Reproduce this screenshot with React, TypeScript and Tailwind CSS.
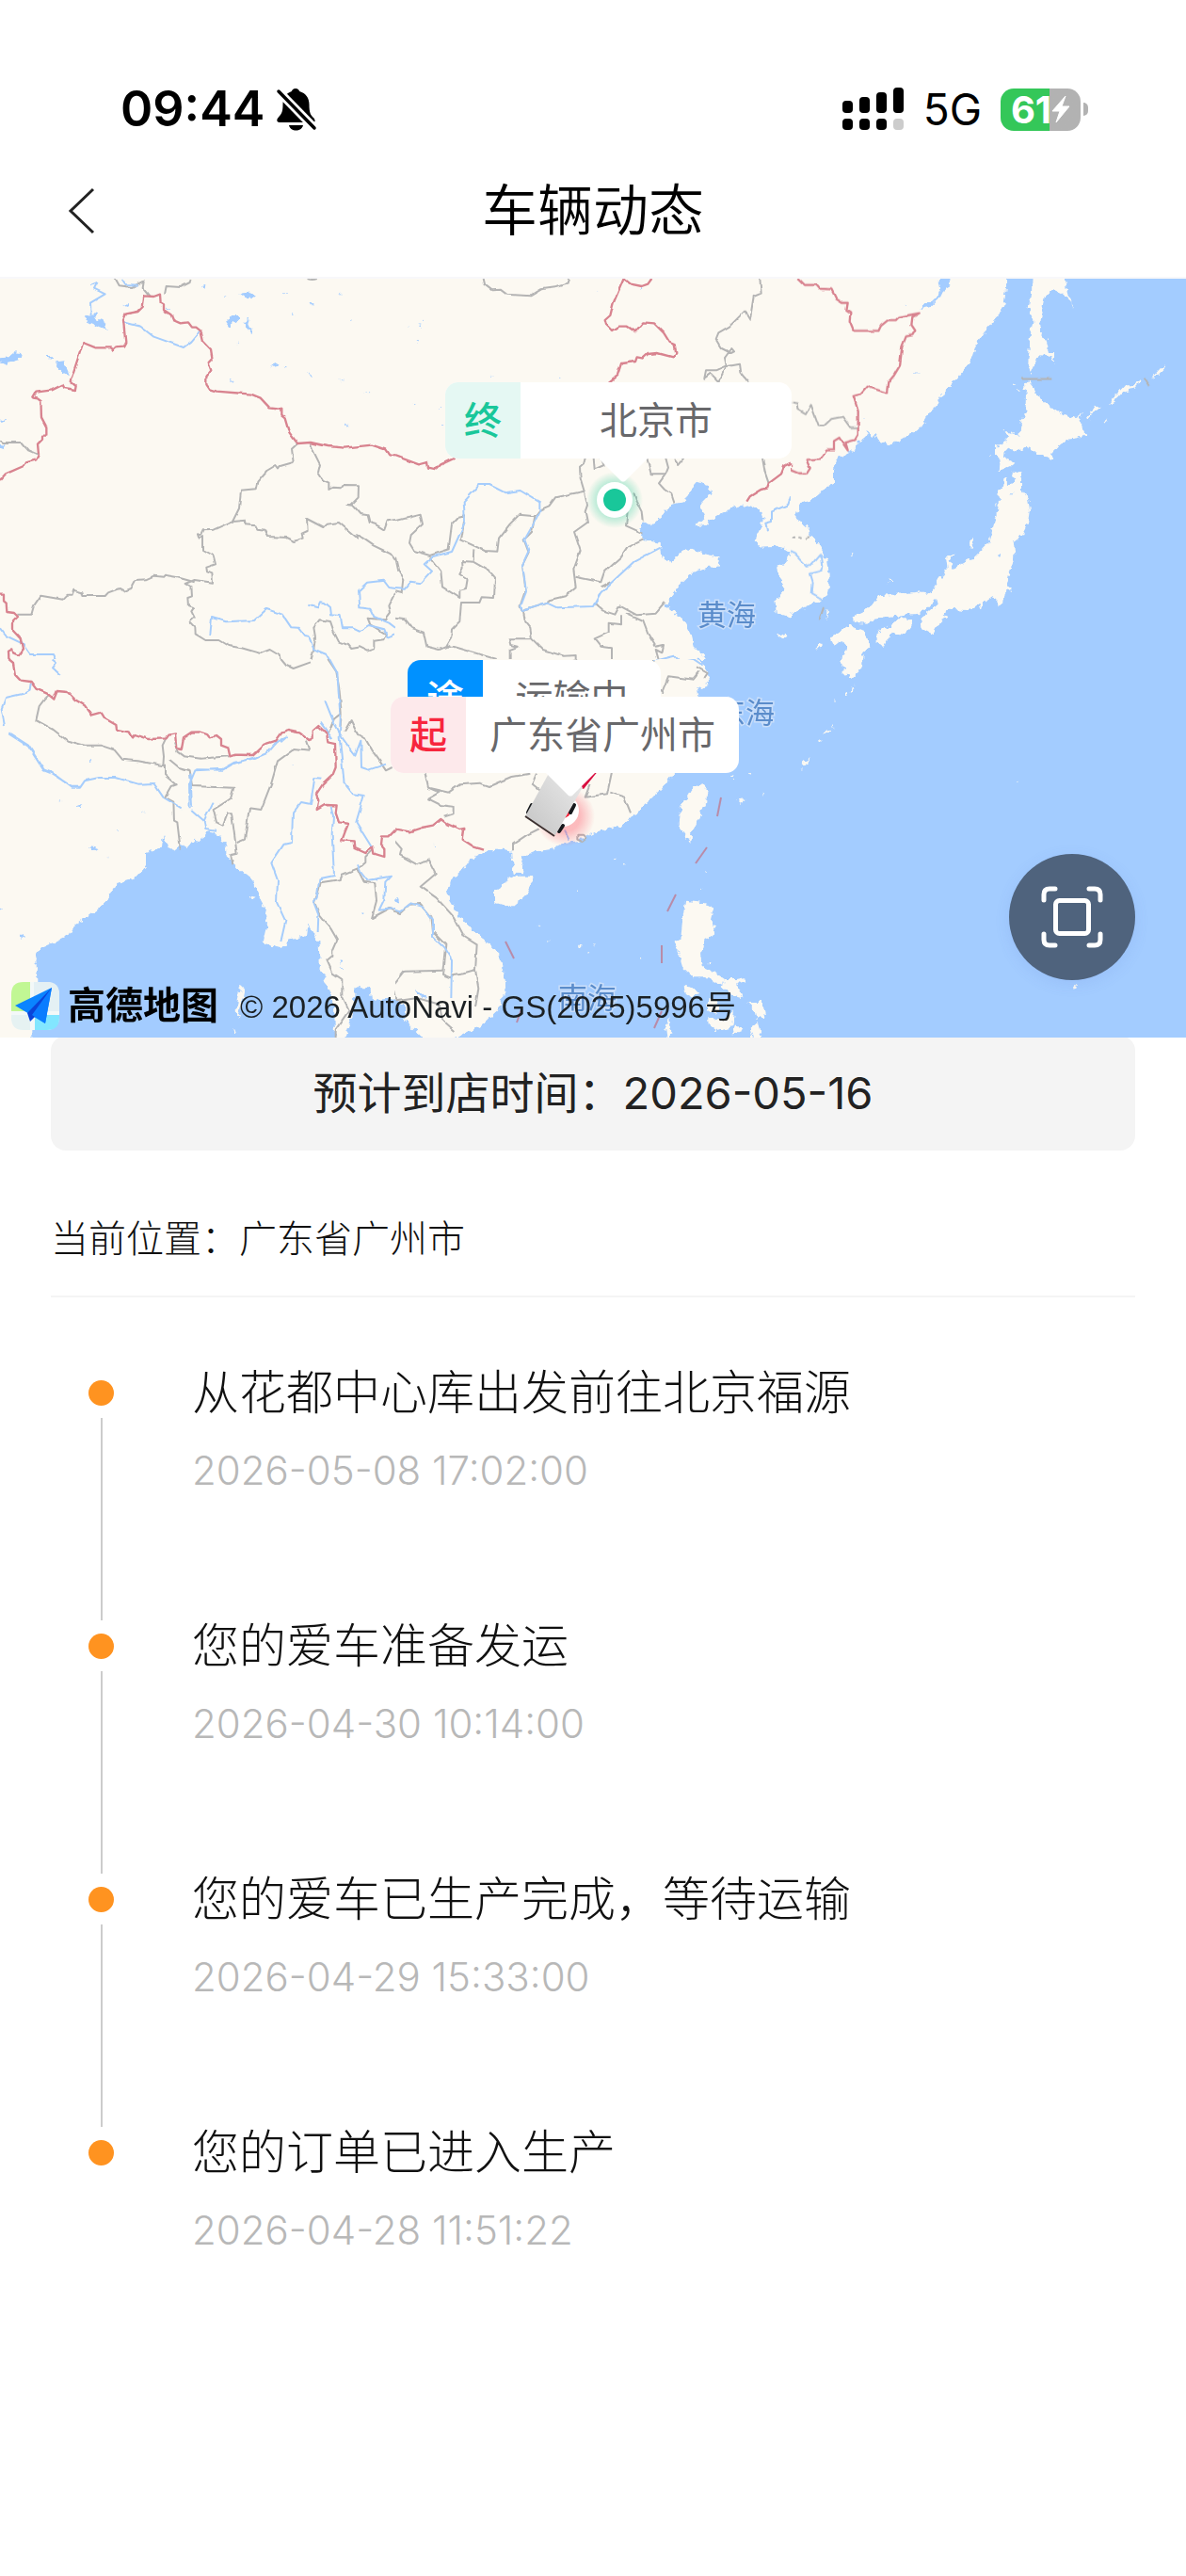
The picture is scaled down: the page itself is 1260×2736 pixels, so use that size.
import React from 'react';

interface TrackEvent {
  title: string;
  time: string;
}

const events: TrackEvent[] = [
  { title: '从花都中心库出发前往北京福源', time: '2026-05-08 17:02:00' },
  { title: '您的爱车准备发运', time: '2026-04-30 10:14:00' },
  { title: '您的爱车已生产完成，等待运输', time: '2026-04-29 15:33:00' },
  { title: '您的订单已进入生产', time: '2026-04-28 11:51:22' }
];

interface TileData {
  x: number;
  y: number;
  width: number;
  height: number;
  viewBox: string;
  sea?: string;
  land?: string;
  lakes?: string;
  rivers?: string;
  provinces?: string;
  border?: string;
}

// Six map tiles, each drawn at three units per pixel.
// The outer ones run a little past the edge of the map.
const tiles: TileData[] = [
  {
    x: 0,
    y: 0,
    width: 420,
    height: 410,
    viewBox: '0 0 1260 1230',
    lakes:
      'M265 143L300 130L312 133L300 143L325 150L345 182L320 175L280 155Z M0 268L30 265L45 253L70 255L65 275L40 282L15 288L0 283Z M140 263L170 265L172 273L150 270Z M182 283L205 280L212 305L222 328L190 312L180 298Z M765 62L785 60L815 70L808 82L785 78Z M735 138L765 138L750 155L738 160L735 178L723 178L725 155Z M775 155L795 145L790 160L803 188L793 187Z M390 102L412 99L405 108Z M643 38L655 36L653 50L645 48Z M975 315L998 332L985 330Z M870 295L885 289L890 295L862 303Z M987 96L1003 97L990 101Z M1160 379L1180 379L1178 382Z M0 545L20 548L10 562L0 558Z M0 467L25 465L5 474Z M1103 484L1112 486L1106 491Z M1083 341L1095 341L1090 346Z M735 340L743 340L738 347Z M925 131L938 132L930 135Z M755 217L765 220L760 225Z M1075 62L1090 70L1080 70Z M905 296L915 297L910 301Z M530 110L540 112L535 120Z M715 77L725 77L720 81Z M905 64L912 64L910 68Z M1112 150L1118 150L1116 153Z',
    rivers:
      'M285 40L310 30L300 50L335 67L288 95L290 135 M388 18L400 36L440 38 M395 157L448 170L490 203L585 237L610 218L638 185 M670 1152L675 1098L720 1111L810 1107L850 1071L900 1088L928 1129L950 1130L972 1158L985 1160L1000 1198L1040 1215L1065 1260 M982 1058L1012 1066L1020 1048L1035 1050L1053 1065L1056 1090L1085 1092L1092 1132L1125 1132L1145 1142L1175 1122L1225 1135L1235 1160L1260 1150 M1260 1005L1240 1002L1223 980L1170 986L1143 1012L1147 1066L1180 1070L1192 1095L1240 1115L1260 1130 M0 1132L18 1155L70 1180L95 1215L168 1215L180 1240L168 1260',
    provinces:
      'M368 18L380 40L420 45L458 25L455 45L480 75 M525 68L530 42L575 45L605 30L608 18 M980 18Q995 24 1010 18 M0 533L10 540L68 540L90 565L120 578 M948 544L930 560L935 603L893 615L888 622L880 612L850 630L820 665L815 688L768 692L762 750L742 790L680 818L650 820L643 835L630 832L635 848L648 840L648 882L680 900L687 928L658 938L660 952L676 958L678 986L620 978L590 990L610 1000L612 1030L598 1035L600 1060L618 1066L610 1078L620 1098L605 1112L622 1130L623 1150L655 1170L700 1170L730 1188L770 1195L830 1212L860 1200L890 1218L900 1260L925 1245L945 1260L965 1238L990 1235L1000 1198 M990 543L1000 570L1020 610L1014 635L1030 660L1048 668L1048 690L1060 683L1085 685L1092 675L1143 676L1142 715L1120 738L1105 738L1125 740L1150 768L1172 772L1178 795L1195 800L1225 818L1235 790L1260 786 M742 792L782 788L785 802L815 805L820 815L845 818L855 840L915 843L940 855L965 845L962 830L980 822L978 783L1030 810L1040 800L1080 795L1140 845L1138 832L1190 868L1225 885L1245 895L1260 915 M55 1088L100 1088L108 1060L130 1028L200 1040L215 1025L230 1025L235 1010L262 1018L265 1029L335 1029L345 1018L380 1005L395 1013L415 1005L430 978L465 976L490 965L520 968L525 962L560 968L620 985 M1000 1198L1005 1160L1000 1130L1018 1105L1053 1110L1065 1145L1080 1175L1110 1185L1120 1197L1150 1192L1170 1202L1192 1195L1192 1172L1222 1168L1230 1150L1180 1120L1172 1100L1230 1105L1245 1085L1240 1060L1260 1020',
    border:
      'M0 660L18 640L75 615L80 605L115 595L123 578L120 545L135 530L135 518L148 518L148 490L132 460L130 405L120 397L106 395L115 380L165 373L200 356L205 366L240 372L242 360L224 345L265 222L305 238L355 238L360 245L370 235L393 233L400 220L393 150L402 130L440 123L455 108L460 73L490 75L510 68L512 95L522 100L522 118L545 133L552 150L575 160L600 157L612 173L625 173L640 185L648 218L672 243L677 275L665 288L673 310L658 330L658 355L668 370L690 377L800 386L830 398L860 430L898 435L898 452L908 460L922 508L948 543L990 540L1045 552L1100 557L1185 548L1228 562L1240 580L1260 583 M0 1022L12 1022L12 1045L20 1052L22 1080L45 1083L57 1095L42 1110L42 1140L65 1165L72 1200L60 1218L42 1210L40 1198L27 1205L28 1228L42 1245L45 1260'
  },
  {
    x: 420,
    y: 0,
    width: 420,
    height: 410,
    viewBox: '0 0 1260 1230',
    sea:
      'M960 668L1000 680L1008 695L990 720L975 735L978 760L985 778L955 808L985 805L1005 785L1040 765L1085 745L1120 738L1165 760L1175 785L1165 810L1145 850L1165 875L1215 872L1255 885L1250 915L1215 935L1235 990L1240 1010L1210 1045L1215 1085L1260 1100V1240H1000L985 1220L950 1190L940 1150L915 1100L860 1060L880 1030L910 990L945 955L990 940L1028 935L1033 905L985 895L945 878L915 890L880 920L850 905L845 860L795 850L778 825L790 790L820 800L850 775L865 745L920 730L940 690Z',
    land: 'M1215 1155L1245 1145L1250 1157L1225 1165Z',
    lakes:
      'M75 165L82 163L80 170Z M64 215L76 218L72 224Z M780 45L787 48L782 54Z M640 54L645 54L643 58Z M86 149L91 150L88 154Z M40 171L46 172L43 175Z M305 329L311 330L308 333Z M522 329L527 331L524 334Z M53 419L59 421L56 424Z M138 428L145 429L141 433Z M148 483L154 484L151 487Z',
    rivers:
      'M0 1005L30 1007L48 983L82 988L117 950L92 928L120 903L180 888L222 795L218 730L268 675L300 675L350 700L398 693L460 730L460 760L440 800L412 850L425 885L405 930L417 1015L400 1060L405 1077L485 1052L515 1066L630 1062L655 1018L685 990L760 920L845 875 M1260 712L1252 738L1200 760L1200 795L1180 800L1185 820 M830 1235L890 1220L905 1235L960 1240',
    provinces:
      'M278 18L282 35L308 55L335 53L355 68L430 73L465 52L515 45L548 35L552 18 M1162 18L1166 65L1142 75L1130 150L1113 122L1065 170L1030 190L1022 210L1040 240L1070 255L1080 250L1072 240L1050 270L1055 295L1020 310L990 310L985 335L1005 320L1030 345L1055 298L1098 290L1102 320L1125 348 M605 590L600 610L588 620L590 655L602 695L555 705L510 715L490 742L460 755L445 775L395 770L365 800L330 845L325 887L285 885L210 850L222 775L198 780L180 800L170 880L110 900L60 885L45 860L50 835L87 800L80 770L0 790 M602 695L612 740L605 760L612 795L570 825L590 885L568 945L575 1000L540 1030L490 1042L485 1052L405 1077L410 1105L430 1130L435 1165 M250 880L248 920L213 918L215 940L205 960L230 975L225 1005L205 1010L205 1035L150 1000L145 950L110 905 M248 920L300 950L318 970L315 1035L275 1033L268 1050L210 1050L205 1110L180 1135L178 1160L160 1190L185 1190L320 1230 M445 775L435 825L410 850L425 890L405 930L415 1010L398 1060L405 1077 M575 968L655 985L665 955L720 905L740 875L790 850 M655 1000L685 985 M740 760L735 805L790 830 M760 700L770 730L785 760L788 790 M635 1052L660 1075L700 1088L715 1060L770 1090L830 1085L860 1050 M735 1085L790 1110L805 1150L830 1190L855 1185L850 1210L830 1200L840 1235 M720 1090L720 1120L680 1115L680 1145L635 1165L655 1190L690 1195L690 1235 M435 1165L365 1165L370 1185L392 1190L365 1200V1235 M435 1165L470 1200L535 1220L575 1218V1235 M632 590L635 625L665 612L655 590 M802 590L815 640L862 640L870 620L862 590 M862 640L840 670L858 690L880 705L890 735 M888 592L903 612L922 590 M1170 590L1178 635L1190 670 M0 905L10 950L25 975L20 1020L0 1015 M0 1100L30 1105L50 1130L90 1145L100 1190L140 1200L175 1185',
    border:
      'M0 582L75 610L102 603L105 620L130 625L145 610L188 590 M817 18L805 35L785 42L750 35L728 18L695 95L685 135L668 150L672 165L690 183L710 170L740 170L765 187L790 157L825 160L855 190L875 222L890 228L895 255L885 268L835 255L805 258L790 272L770 268L765 282L720 288L708 325L680 348 M1120 728L1130 712L1165 690L1185 685L1190 670L1230 640L1240 615L1260 605'
  },
  {
    x: 840,
    y: 0,
    width: 440,
    height: 410,
    viewBox: '0 0 1320 1230',
    sea: 'M0 0H1320V1240H0Z',
    land:
      'M0 0L687 0L687 50L680 95L665 130L630 170L590 230L575 275L545 320L490 375L465 420L440 445L415 490L380 515L345 535L310 547L280 535L270 515L262 525L245 505L235 525L215 540L205 560L185 572L150 590L135 625L135 670L105 690L75 715L30 735L20 770L15 780L45 805L70 840L95 880L115 915L122 960L122 1000L110 1035L95 1048L60 1058L0 1085Z M770 0L870 0L880 60L900 95L865 65L835 52L812 75L797 150L795 190L815 215L822 250L840 252L840 295L832 265L790 262L778 290L766 318L757 285L765 195L772 150L758 105L768 70Z M757 347L775 370L800 405L850 445L880 455L915 465L933 435L920 470L935 505L945 515L915 525L880 530L850 555L832 575L830 597L790 575L755 555L715 568L700 560L680 568L678 585L715 605L705 615L665 633L668 590L652 575L655 550L680 540L690 525L680 505L700 505L730 515L735 470L748 455L750 385L742 365Z M680 650L692 652L693 675L715 668L720 655L705 645L708 632L735 638L735 690L755 715L762 755L755 800L737 835L710 855L715 900L700 945L690 990L705 1008L680 1020L675 1050L655 1060L655 1035L640 1030L612 1050L605 1078L598 1055L570 1075L505 1070L485 1085L502 1095L470 1115L450 1150L415 1130L412 1105L440 1080L470 1055L465 1035L450 1050L430 1072L410 1085L350 1090L300 1098L255 1105L245 1118L200 1115L198 1095L235 1078L285 1030L345 1022L415 1015L450 1022L460 995L490 955L500 945L495 905L525 895L507 920L515 942L585 905L630 860L645 810L660 760L663 720L658 690L675 680Z M350 1095L390 1105L385 1125L362 1155L320 1148L300 1190L275 1180L275 1150L300 1130L330 1115Z M190 1122L215 1135L240 1145L250 1190L230 1220L225 1260L160 1260L165 1215L180 1200L165 1170L140 1190L125 1160L160 1140Z M943 465L960 440L972 422L992 430L970 438L950 465Z M1013 422L1040 385L1065 358L1090 358L1115 345L1112 355L1085 370L1060 378L1030 410Z M1150 340L1185 298L1196 300L1175 320Z M1000 470L1012 466L1005 476Z M580 845L585 860L572 878L570 858Z M112 1075L120 1078L112 1110Z M78 1198L102 1178L92 1198Z M188 895L198 896L195 901Z M895 92L903 108L900 110Z M710 350L718 360L712 358Z M720 370L729 370L726 376Z M630 582L640 580L635 588Z M315 972L320 980L315 982Z M303 988L312 986L308 991Z M648 738L656 736L652 744Z',
    lakes:
      'M470 18L505 18L508 40L490 50L478 75L445 108L425 112L405 118L425 100L465 80L478 50Z M395 316L408 317L400 320Z M700 700L710 700L705 704Z M660 897L672 898L665 902Z M365 98L372 100L368 104Z M230 459L233 463L230 465Z',
    rivers: 'M0 888L15 895L50 932L70 928L95 898L100 935L92 950L60 958L68 985L65 1020L100 1040',
    provinces:
      'M5 412L20 415L22 435L48 450L65 420L90 488L105 488L130 465L165 458L190 492L215 492 M735 337H832 M1127 335L1142 360 M105 1065L92 1105 M5 845L15 845M25 842L35 845M48 845L60 840',
    border:
      'M22 18L42 38L85 38L95 50L130 52L145 82L165 95L182 95L178 120L190 128L188 155L200 184L280 184L288 168L310 150L335 150L345 140L410 128L388 140L385 165L397 183L388 198L368 202L355 235L348 295L330 325L310 350L306 382L245 362L225 385L200 392L215 440L215 515L205 532L175 540L182 565L155 525L138 535L138 565L115 565L95 592L50 595L62 622L52 638L25 638L0 628V608'
  },
  {
    x: 0,
    y: 410,
    width: 420,
    height: 420,
    viewBox: '0 0 1260 1260',
    sea:
      'M103 1260L103 1140L118 1030L115 945L130 920L165 905L220 880L240 845L280 820L330 780L375 715L435 695L465 660L465 615L515 600L525 560L535 600L560 608L575 590L600 600L620 575L640 580L660 550L700 560L718 590L722 625L745 655L800 700L820 745L845 790L852 840L838 905L895 922L915 900L975 880L980 845L1000 880L1015 900L1020 980L1045 1040L1065 1100L1070 1260Z M1098 1260L1098 1210L1125 1130L1130 1060L1145 1045L1180 1045L1185 1085L1230 1080L1262 1085V1260Z',
    land: 'M770 1040L780 1048L765 1120L757 1150L755 1105Z M745 1180L752 1185L748 1198Z M800 755L815 758L805 765Z',
    lakes:
      'M282 600L315 605L305 612Z M243 470L262 462L255 475Z M62 878L75 878L70 895Z M1085 958L1093 960L1088 975Z M190 450L196 452L192 455Z M285 320L290 325L285 328Z M375 543L378 548L374 549Z M450 484L458 487L452 490Z M0 793L10 797L0 799Z M1078 985L1093 985L1090 991Z M1153 805L1160 806L1156 814Z M930 338L936 338L933 342Z M340 626L346 626L343 630Z',
    rivers:
      'M165 0L180 12L168 28L192 50 M98 78L95 98L75 110L18 123L5 158L15 210 M28 235L90 275L140 352L165 362L230 410L255 410L270 388L315 378L370 378L440 398L490 396L520 440L578 475 M605 475L603 400L622 355L710 350L745 330L815 315L850 300L880 265L912 250L895 265 M607 365L612 470 M28 238L90 278L140 355L165 365L230 407L255 407 M625 352L710 353L745 333L815 312 M610 480L650 515L655 540L690 545 M650 515L680 455 M1035 130L1065 205L1090 250L1132 308L1150 260L1152 345L1175 353L1230 335 M1022 203L1060 255 M1050 0L1075 45L1085 190L1082 250L1097 395L1125 430L1160 435L1135 520L1185 600 M1025 380L1003 378L995 430L990 462L960 456L933 490L930 585L905 590L865 650L885 705L882 775L910 835L895 900 M1055 470L1062 500L1058 560L1065 690L1018 700L1010 760L1000 775L1015 815L1013 870 M1140 655L1150 680L1170 705L1245 692L1228 710L1225 765L1208 800L1260 795',
    provinces:
      'M895 0L910 18L935 30L990 10 M1045 0L1072 40L1082 100L1088 175L1085 215 M155 115L140 130L125 150L115 195L170 225L215 260L270 275L320 275L365 290L390 320L440 325L520 340L522 310L518 275L530 250 M555 265L565 295L585 310L640 317L730 310 M540 320L570 345L605 355L612 405L745 410L735 445L680 480L690 520L710 530L725 490L738 490L755 620L735 625L742 655 M525 335L525 370L560 400L545 405L525 440L553 455L555 515L565 520L575 605 M755 585L780 575L795 475L832 480L865 395L885 325L940 285L985 290L975 260 M1085 175L1065 190L1045 240 M1098 230L1118 195L1140 240L1165 255L1185 290L1210 325L1230 355L1250 345 M1190 605L1165 630L1165 648L1140 670L1090 690L1085 702L1022 712L1015 740L1002 775L1018 815L1055 860L1075 895L1060 930L1060 945L1042 960L1060 1000L1090 1020V1075L1112 1120L1070 1180V1206 M1140 670L1160 710L1195 715L1200 770L1185 825L1240 795L1260 805',
    border:
      'M28 0L42 12L48 50L65 68L98 72L115 95L150 110L172 128L182 102L215 105L240 130L270 148L292 178L322 170L335 190L370 210L372 225L410 232L420 250L430 240L475 255L530 253L538 242L558 238L562 285L578 288L585 250L610 233L635 232L660 240L668 250L690 243L705 255V275L727 283L733 310L750 305L805 306L842 272L880 260L898 235L920 228L955 235L985 258L998 255V228L1015 213L1042 238L1045 265L1068 270L1070 345L1060 370L1028 400L1008 430L1015 450L1010 480L1035 465L1073 466L1070 490L1080 520L1110 525L1100 550L1090 577L1130 580L1132 600L1165 615L1188 598L1192 620L1225 630L1225 605L1212 590L1215 565L1240 565L1260 545'
  },
  {
    x: 420,
    y: 410,
    width: 420,
    height: 420,
    viewBox: '60 30 1260 1260',
    sea:
      'M40 1110L60 1115L95 1140L90 1180L115 1205L150 1240V1300H40Z M250 1300L250 1240L330 1200L385 1150L410 1100L405 1020L390 970L350 930L300 890L265 850L235 800L225 770L235 735L275 700L300 665L340 645L400 635L430 640L430 660L440 710L470 712L460 690L465 660L500 645L560 635L600 615L640 610L700 580L780 560L820 530L870 480L910 440L945 395L1010 300L1040 200L1018 125L1060 110L1055 70L1020 20L1000 0H1330V1300Z',
    land:
      'M375 765L385 765L410 735L440 722L495 722L498 745L475 785L430 822L375 805Z M1040 430L1055 450L1050 490L1020 550L1003 585L1000 615L985 590L962 560L965 520L985 475L1010 440Z M985 800L1025 805L1075 820L1065 860L1083 880L1070 910L1045 925L1035 970L1040 1010L1080 1030L1110 1050L1100 1070L1060 1045L1010 1045L975 1010L960 960L950 930L970 925L975 860Z M980 1070L1010 1075L1030 1095L1000 1105L985 1090Z M1110 1050L1145 1050L1170 1045L1180 1060L1150 1065L1165 1110L1130 1100L1100 1075Z M1060 1110L1100 1130L1085 1160L1055 1150Z M1180 1125L1230 1125L1240 1170L1210 1175L1205 1150Z M1060 1170L1110 1180L1140 1150L1135 1200L1085 1215L1060 1195Z M1145 1190L1165 1215L1130 1230Z M1215 1185L1230 1260L1205 1260L1190 1205Z M930 1165L935 1210L950 1225L925 1236L922 1210Z M750 663L758 665L752 675Z M833 978L848 982L840 987Z M1130 403L1143 404L1135 412Z M1228 458L1233 460L1230 466Z M1150 478L1178 475L1160 488Z M1048 705L1055 706L1050 712Z M518 878L524 882L520 885Z M545 922L553 924L548 930Z M640 766L646 768L643 772Z M790 680L799 683L794 686Z M645 938L655 940L648 948Z M672 958L679 962L674 965Z M1055 995L1062 1000L1056 1010Z M1030 755L1036 758L1031 764Z M1185 393L1195 394L1188 398Z M690 937L698 939L693 942Z',
    lakes: 'M60 795L72 797L68 806Z M120 1085L145 1095L165 1110L135 1105Z M185 620L192 622L188 630Z',
    rivers:
      'M0 350L45 385 M40 725L25 735L28 800L5 835L35 822L75 835L110 808L150 820L180 860V915L215 950L240 990L238 1110 M885 30L945 20L1010 30L1040 50 M600 575L615 605',
    provinces:
      'M0 350L20 375L50 380 M45 595L80 635L75 655L130 685L165 670L188 715L140 755L190 790L245 850L280 915L320 940L315 1020L280 1030L245 1035L235 1045L210 1035L220 940L180 900L175 850L140 810L105 812L75 840L40 825 M50 1075L90 1025L215 1022 M55 1075L65 1120L130 1110L200 1130L210 1180L250 1215 M315 1020L325 1080L315 1140 M155 395L165 440L200 455L165 475L205 495L245 500L245 520L215 530 M165 440L230 455L265 430L330 425L360 435L430 405L490 395 M510 395L495 430L520 450 M520 570L480 590L435 620V640 M680 430L665 470L735 460L750 390 M745 455L790 470L810 520 M640 590L660 590L670 600L655 612L640 605Z M425 20L540 10L640 30L630 0 M750 30V0 M900 0L885 30L870 95L910 135L930 85L1010 95L1030 70 M1020 55L1055 75L1045 90',
    border:
      'M0 655L25 660L25 630L15 595L50 595L60 572L105 580L145 567L180 560L205 540L225 555L265 573L280 570L275 605L310 628L342 638'
  },
  {
    x: 840,
    y: 410,
    width: 440,
    height: 420,
    viewBox: '0 0 1320 1260',
    sea: 'M0 -10H1320V1270H0Z',
    land:
      'M155 -10L230 -10L222 35L190 65L185 45L165 50L175 30L160 20Z M170 105L180 102L182 114L175 116Z M198 85L202 95L194 107Z M110 230L120 222L124 232L106 245Z M90 253L99 258L92 264Z M38 335L62 315L55 330L40 340Z M28 348L35 346L32 354Z M130 214L136 216L131 222Z M139 133L144 136L140 138Z M900 1045L912 1034L910 1045L903 1056Z M723 390L730 391L727 395Z'
  }
];

// Dashes over the southern sea: x1, y1, x2, y2 in map pixels
const seaDashes = [
  [766, 557, 762, 577],
  [751, 610, 739, 627],
  [718, 660, 709, 678],
  [703, 714, 703, 733],
  [537, 710, 546, 728],
  [703, 784, 695, 802],
  [554, 782, 549, 796]
];

const VehicleMap: React.FC = () => (
  <svg
    className="block h-full w-full"
    viewBox="0 6 1260 806"
    preserveAspectRatio="xMidYMid slice"
    aria-hidden="true"
  >
    <defs>
      <filter id="rough" filterUnits="userSpaceOnUse" x="-20" y="-20" width="1300" height="860">
        <feTurbulence type="fractalNoise" baseFrequency="0.16" numOctaves="2" seed="4" result="noise" />
        <feDisplacementMap in="SourceGraphic" in2="noise" scale="8" xChannelSelector="R" yChannelSelector="G" />
      </filter>
      <filter id="wavy" filterUnits="userSpaceOnUse" x="-20" y="-20" width="1300" height="860">
        <feTurbulence type="fractalNoise" baseFrequency="0.1" numOctaves="1" seed="9" result="noise" />
        <feDisplacementMap in="SourceGraphic" in2="noise" scale="4" xChannelSelector="R" yChannelSelector="G" />
        <feGaussianBlur stdDeviation="0.4" />
      </filter>
      <radialGradient id="haloGreen">
        <stop offset="0.55" stopColor="#1dc996" stopOpacity="0.35" />
        <stop offset="1" stopColor="#1dc996" stopOpacity="0" />
      </radialGradient>
      <radialGradient id="haloRed">
        <stop offset="0.5" stopColor="#fb2740" stopOpacity="0.3" />
        <stop offset="1" stopColor="#fb2740" stopOpacity="0" />
      </radialGradient>
      <linearGradient id="truck" x1="0" y1="1" x2="1" y2="0">
        <stop offset="0" stopColor="#c4c4c4" />
        <stop offset="1" stopColor="#ececec" />
      </linearGradient>
    </defs>

    <g filter="url(#rough)">
      <rect x="-20" y="-20" width="1300" height="860" fill="#fcf9f2" />
      {tiles.map((tile) => (
        <svg
          key={`${tile.x}-${tile.y}`}
          x={tile.x}
          y={tile.y}
          width={tile.width}
          height={tile.height}
          viewBox={tile.viewBox}
        >
          <path d={tile.sea} fill="#a3ccff" />
          <path d={tile.land} fill="#fcf9f2" />
          <path d={tile.lakes} fill="#a3ccff" />
        </svg>
      ))}
    </g>
    <g filter="url(#wavy)">
      {tiles.map((tile) => (
        <svg
          key={`${tile.x}-${tile.y}`}
          x={tile.x}
          y={tile.y}
          width={tile.width}
          height={tile.height}
          viewBox={tile.viewBox}
          fill="none"
          strokeLinejoin="round"
        >
          <path d={tile.provinces} stroke="#b4b4b4" strokeWidth="6" />
          <path d={tile.rivers} stroke="#a6cdfc" strokeWidth="6" />
          <path d={tile.border} stroke="#d8838f" strokeWidth="7" />
        </svg>
      ))}
    </g>
    {seaDashes.map(([x1, y1, x2, y2]) => (
      <path key={`${x1}-${y1}`} d={`M${x1} ${y1}L${x2} ${y2}`} stroke="#b98ba8" strokeWidth="2" />
    ))}

    <g
      fill="#5a8ccb"
      stroke="#c9defa"
      strokeWidth="3"
      paintOrder="stroke"
      fontSize="31"
      className="font-['Noto_Sans_CJK_SC',sans-serif]"
    >
      <text x="741" y="374">黄海</text>
      <text x="761" y="478">东海</text>
      <text x="593" y="781">南海</text>
    </g>

    {/* Destination and departure points */}
    <circle cx="653" cy="241" r="30" fill="url(#haloGreen)" />
    <circle cx="653" cy="241" r="19" fill="#fff" />
    <circle cx="653" cy="241" r="12" fill="#19c79a" />
    <circle cx="600" cy="577" r="32" fill="url(#haloRed)" />
    <circle cx="598" cy="571" r="17" fill="#fff" />
    <circle cx="598" cy="570" r="9" fill="#f7263d" />
    <path d="M636 528L620 548L616 546L630 530Z" fill="#d80d3f" />
    <g stroke="#16191c" strokeWidth="4">
      <path d="M579 545L575 553M565 565L561 573M610 565L606 573M598 587L594 593" strokeLinecap="round" />
    </g>
    <path d="M586 526L619 546L590 597L558 577Z" fill="url(#truck)" />
    <path d="M558 577L589 598" stroke="#3b302f" strokeWidth="2" />
  </svg>
);

interface PlaceLabelProps {
  tag: string;
  tagClass: string;
  text: string;
  className: string;
}

const PlaceLabel: React.FC<PlaceLabelProps> = ({ tag, tagClass, text, className }) => (
  <div className={`absolute flex h-[81px] rounded-[14px] bg-white text-[40px] leading-[81px] ${className}`}>
    <span className={`w-20 rounded-l-[14px] text-center font-medium ${tagClass}`}>{tag}</span>
    <span className="flex-1 text-center text-[#68686b]">{text}</span>
  </div>
);

const StatusBar: React.FC = () => (
  <div className="flex h-[70px] items-center justify-between pr-[104px] pl-[128px] font-['Inter',sans-serif] text-black">
    <div className="flex items-center gap-3">
      <span className="text-[52px] leading-[70px] font-semibold">09:44</span>
      <svg className="h-[46px] w-[44px]" viewBox="0 0 44 46" aria-label="静音">
        <path
          d="M21 1C23.500 1 24.800 2.500 25.200 4C32 6 35.500 11 35.500 18C35.500 27 37 29 40 32C42 34 42.500 37 39.500 37H4C1 37 .5 34 2.500 32C6 28 7.500 26 7.500 18C7.500 11 11 6 16.800 4C17.200 2.500 18.500 1 21 1ZM14 40H29C28 44 25 45.500 21.500 45.500C18 45.500 15 44 14 40Z"
          fill="#000"
        />
        <path d="M1 2L42 44" stroke="#fff" strokeWidth="9" />
        <path d="M3 4L41 43" stroke="#000" strokeWidth="3.500" strokeLinecap="round" />
      </svg>
    </div>
    <div className="flex items-center gap-5">
      <svg className="h-[46px] w-[66px]" viewBox="0 0 66 46" aria-label="信号">
        <rect x="0" y="14" width="11" height="13" rx="4" />
        <rect x="18" y="10" width="11" height="17" rx="4" />
        <rect x="36" y="5" width="11" height="22" rx="4" />
        <rect x="54" y="0" width="11" height="27" rx="4" />
        <rect x="0" y="33" width="11" height="12" rx="4" />
        <rect x="18" y="33" width="11" height="12" rx="4" />
        <rect x="36" y="33" width="11" height="12" rx="4" />
        <rect x="54" y="33" width="11" height="12" rx="4" fill="#cccccc" />
      </svg>
      <span className="text-[46px] leading-[70px]">5G</span>
      <div className="flex items-center gap-[3px]">
        <div className="flex h-[45px] w-[85px] items-center justify-center rounded-[14px] bg-linear-to-r from-[#34c759] from-61% to-[#b2b2b2] to-61% text-white">
          <span className="text-[40px] leading-[45px] font-bold">61</span>
          <svg className="h-[30px] w-5" viewBox="0 0 20 30" aria-hidden="true">
            <path d="M15 1L1 17H9L5 29L19 12H11Z" fill="#fff" stroke="#fff" strokeLinejoin="round" />
          </svg>
        </div>
        <div className="h-[14px] w-[5px] rounded-r-full bg-[#b2b2b2]" />
      </div>
    </div>
  </div>
);

export default function App() {
  return (
    <div className="min-h-screen bg-white pt-[81px] font-['Inter','Noto_Sans_CJK_SC',sans-serif] text-[#111111]">
      <StatusBar />

      {/* Header */}
      <header className="grid h-[145px] grid-cols-[1fr_auto_1fr] items-center border-b-2 border-[#f8f8fa] px-[54px] pt-[2px]">
        <button type="button" aria-label="返回" className="flex h-20 w-20 items-center pl-[18px]">
          <svg className="h-[50px] w-[30px]" viewBox="0 0 30 50" fill="none" aria-hidden="true">
            <path d="M27 2L3 25L27 48" stroke="#222" strokeWidth="3" />
          </svg>
        </button>
        <h1 className="text-[59px] leading-[80px] font-[350] text-black">车辆动态</h1>
      </header>

      {/* Map */}
      <section className="relative z-10 h-[806px] overflow-hidden bg-[#a3ccff]">
        <VehicleMap />

        <PlaceLabel tag="终" tagClass="bg-[#e5f8f3] text-[#19c79a]" text="北京市" className="top-[110px] left-[473px] w-[368px]" />
        <PlaceLabel tag="途" tagClass="bg-[#0091ff] text-white" text="运输中" className="top-[405px] left-[433px] w-[269px]" />
        <PlaceLabel tag="起" tagClass="bg-[#fde9eb] text-[#f7263d]" text="广东省广州市" className="top-[444px] left-[415px] w-[370px]" />
        <svg className="absolute top-[191px] left-[636px] h-[25px] w-[52px]" viewBox="0 0 52 25" aria-hidden="true">
          <path d="M0 0H52L28 24Q26 25 24 24Z" fill="#fff" />
        </svg>
        <svg className="absolute top-[525px] left-[580px] h-[25px] w-[52px]" viewBox="0 0 52 25" aria-hidden="true">
          <path d="M0 0H52L28 24Q26 25 24 24Z" fill="#fff" />
        </svg>

        <button
          type="button"
          aria-label="全览"
          className="absolute right-[54px] bottom-[61px] flex h-[134px] w-[134px] items-center justify-center rounded-full bg-[#4f637d] shadow-[0_4px_16px_rgba(80,110,200,0.12)]"
        >
          <svg className="h-[66px] w-[66px]" viewBox="0 0 66 66" fill="none" stroke="#fff" strokeWidth="5" strokeLinecap="round" aria-hidden="true">
            <path d="M3 15V9Q3 3 9 3H15M51 3H57Q63 3 63 9V15M63 51V57Q63 63 57 63H51M15 63H9Q3 63 3 57V51" />
            <rect x="15.500" y="15.500" width="35" height="35" rx="4" />
          </svg>
        </button>

        <div className="absolute bottom-[6px] left-3 flex items-center gap-[9px]">
          <svg className="h-[51px] w-[51px]" viewBox="0 0 51 51" aria-hidden="true">
            <rect width="51" height="51" rx="13" fill="#f3f8f8" />
            <path d="M13 0H20V31H0V13Q0 0 13 0Z" fill="#c1f794" />
            <path d="M24 0H38Q51 0 51 13V31H24Z" fill="#e4f0f4" />
            <path d="M0 35H20V51H13Q0 51 0 38Z" fill="#e6f2f2" />
            <path d="M25 35H51V38Q51 51 38 51H25Z" fill="#82e6ff" />
            <path d="M43 6L36 44L4 25Z" fill="#0a84ff" />
            <path d="M43 6L17 33L20 42L25 37Z" fill="#0b44d8" />
            <path d="M43 6L22 35L36 44Z" fill="#0a7cff" />
          </svg>
          <div className="flex items-center gap-[23px]">
            <span className="text-[40px] leading-[56px] font-bold text-black">高德地图</span>
            <span className="pt-1 font-['Liberation_Sans','Noto_Sans_CJK_SC',sans-serif] text-[33px] leading-[52px] text-[#1b2023]">
              © 2026 AutoNavi - GS(2025)5996号
            </span>
          </div>
        </div>
      </section>

      <main className="px-[54px]">
        <p className="-mt-[2px] rounded-2xl bg-[#f4f4f4] text-center text-[47px] leading-[122px] text-[#222222]">
          预计到店时间：2026-05-16
        </p>
        <p className="mt-[62px] border-b-2 border-[#f4f4f4] pb-7 text-[40px] leading-[64px] font-light">
          当前位置：广东省广州市
        </p>

        {/* Timeline */}
        <ol className="mt-[74px] pl-10">
          {events.map((event, index) => (
            <li key={event.time} className="flex gap-[83px]">
              <div className="flex w-[27px] flex-col items-center">
                <div className="flex h-[54px] items-center">
                  <span className="h-[27px] w-[27px] rounded-full bg-[#ff9320]" />
                </div>
                {index < events.length - 1 && <div className="w-[2px] flex-1 bg-[#cccccc]" />}
              </div>
              <div className="pb-[132px]">
                <h2 className="text-[50px] leading-[54px] font-light">{event.title}</h2>
                <time className="mt-[29px] block text-[42px] leading-[54px] font-light text-[#b8b8b8]">
                  {event.time}
                </time>
              </div>
            </li>
          ))}
        </ol>
      </main>
    </div>
  );
}
